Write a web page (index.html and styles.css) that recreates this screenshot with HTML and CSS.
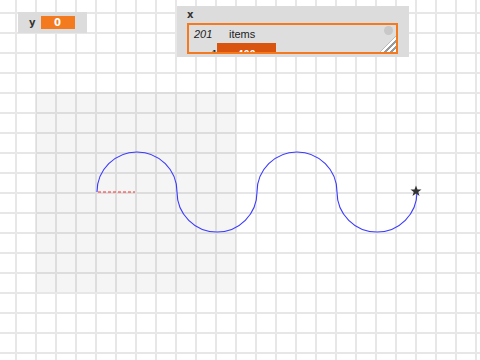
FILE: index.html
```html
<!DOCTYPE html>
<html>
<head>
<meta charset="utf-8">
<link rel="stylesheet" href="styles.css">
</head>
<body>
<div class="stage">
  <svg class="pen" width="480" height="360" viewBox="0 0 480 360">
    <rect x="36" y="92" width="200" height="200" fill="#000" fill-opacity="0.04"/>
    <line x1="98" y1="192" x2="135" y2="192" stroke="#ff2a2a" stroke-width="1.2" stroke-dasharray="3 2"/>
    <path d="M97 192 A40 40 0 0 1 177 192 A40 40 0 0 0 257 192 A40 40 0 0 1 337 192 A40 40 0 0 0 417 192" fill="none" stroke="#3a3aff" stroke-width="1.1"/>
    <polygon points="416,185.5 417.5,189.5 421.5,189.5 418.3,192 419.5,196 416,193.6 412.5,196 413.7,192 410.5,189.5 414.5,189.5" fill="#333"/>
  </svg>

  <div class="watcher watcher-y">
    <span class="w-label">y</span>
    <span class="w-value">0</span>
  </div>

  <div class="watcher watcher-x">
    <div class="w-label x-label">x</div>
    <div class="list">
      <div class="list-row row1">
        <span class="len">201</span>
        <span class="items">items</span>
      </div>
      <div class="list-row row2">
        <span class="idx">1</span>
        <span class="cell">400</span>
      </div>
      <span class="knob"></span>
      <span class="resize"></span>
    </div>
  </div>
</div>
</body>
</html>
```

FILE: styles.css
```css
html, body {
  margin: 0;
  padding: 0;
  background: #fff;
}

.stage {
  position: relative;
  width: 480px;
  height: 360px;
  overflow: hidden;
  background-color: #fff;
  background-image:
    linear-gradient(to right, #e7e7e7 2px, transparent 2px),
    linear-gradient(to bottom, #e7e7e7 2px, transparent 2px);
  background-size: 20px 20px;
  background-position: 15px 12px;
  font-family: "Liberation Sans", Arial, sans-serif;
}

.pen {
  position: absolute;
  left: 0;
  top: 0;
}

.watcher {
  position: absolute;
  background: #dcdcdc;
  box-sizing: border-box;
}

.watcher-y {
  left: 18px;
  top: 12px;
  width: 69px;
  height: 21px;
  display: flex;
  align-items: center;
  padding-left: 11px;
  gap: 5px;
}

.w-label {
  color: #333;
  font-weight: bold;
  font-family: "DejaVu Sans", sans-serif;
  font-size: 10px;
}

.w-value {
  display: flex;
  align-items: center;
  justify-content: center;
  width: 34px;
  height: 13px;
  background: #f37a1f;
  color: #fff;
  font-size: 10px;
  font-weight: bold;
  font-family: "DejaVu Sans", sans-serif;
}

.watcher-x {
  left: 177px;
  top: 6px;
  width: 232px;
  height: 51px;
  padding: 4px 0 0 10px;
}

.x-label {
  height: 13px;
  line-height: 10px;
}

.list {
  position: relative;
  width: 211px;
  height: 31px;
  box-sizing: border-box;
  border: 2px solid #f37a1f;
  background: #dedede;
  overflow: hidden;
}

.list-row {
  display: flex;
  font-size: 11px;
  color: #222;
}

.row1 {
  height: 17px;
  align-items: center;
}

.len {
  font-style: italic;
  width: 40px;
  padding-left: 5px;
  box-sizing: border-box;
}

.idx {
  width: 28px;
  text-align: right;
  font-size: 9px;
  font-weight: bold;
  line-height: 20px;
  padding-top: 1px;
}

.cell {
  width: 59px;
  height: 16px;
  margin-top: 1px;
  background: #d9540e;
  color: #fff;
  font-size: 11px;
  font-weight: bold;
  text-align: center;
  line-height: 22px;
  overflow: hidden;
}

.knob {
  position: absolute;
  right: 3px;
  top: 1px;
  width: 9px;
  height: 9px;
  border-radius: 50%;
  background: #c8c8c8;
}

.resize {
  position: absolute;
  right: 0;
  bottom: 0;
  width: 16px;
  height: 16px;
  background: repeating-linear-gradient(135deg, #fff 0 2px, #9a9a9a 2px 4px);
  clip-path: polygon(100% 0, 100% 100%, 0 100%);
}
```
